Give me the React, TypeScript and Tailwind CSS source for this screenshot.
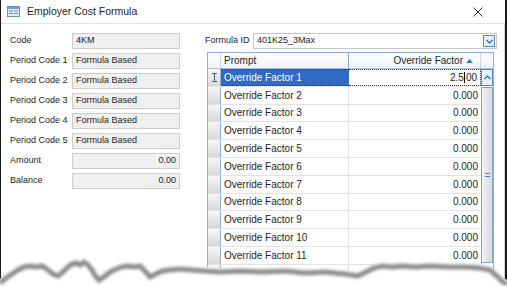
import React from 'react'

const fields = [
  { label: 'Code', value: '4KM', right: false },
  { label: 'Period Code 1', value: 'Formula Based', right: false },
  { label: 'Period Code 2', value: 'Formula Based', right: false },
  { label: 'Period Code 3', value: 'Formula Based', right: false },
  { label: 'Period Code 4', value: 'Formula Based', right: false },
  { label: 'Period Code 5', value: 'Formula Based', right: false },
  { label: 'Amount', value: '0.00', right: true },
  { label: 'Balance', value: '0.00', right: true },
]

const rows = Array.from({ length: 12 }, (_, i) => `Override Factor ${i + 1}`)

function WindowIcon() {
  return (
    <svg width="13" height="11" viewBox="0 0 13 11" className="shrink-0">
      <rect x="0.5" y="0.5" width="12" height="10" fill="#dfe8f4" stroke="#6f8fb8" />
      <rect x="1" y="1" width="11" height="2" fill="#7d9cc6" />
      <rect x="2" y="4.5" width="4" height="1" fill="#6f8fb8" />
      <rect x="7" y="4.5" width="4" height="1" fill="#6f8fb8" />
      <rect x="2" y="7" width="4" height="1" fill="#6f8fb8" />
      <rect x="7" y="7" width="4" height="1" fill="#6f8fb8" />
    </svg>
  )
}

function TornEdge() {
  const edge =
    'M0,279 L6,274 L12,270 L18,266 L24,263 L30,262 L36,263 L42,262 L48,266 L53,270 L58,272 L63,268 L68,263 L72,260 L76,259 L80,261 L84,258 L88,261 L92,266 L96,273 L99,276 L104,273 L110,268 L116,265 L122,263 L128,262 L134,263 L140,262 L145,267 L150,273 L156,270 L162,267 L170,266 L180,265 L192,266 L205,267 L220,268 L240,267 L262,268 L285,267 L305,269 L325,268 L345,270 L358,272 L366,268 L374,264 L382,262 L392,263 L402,262 L415,263 L430,262 L448,263 L465,263 L480,264 L490,266 L497,272 L503,278 L507,280'
  return (
    <svg width="507" height="286" viewBox="0 0 507 286" className="pointer-events-none absolute left-0 top-0">
      <defs>
        <filter id="blur" x="-10%" y="-50%" width="120%" height="200%">
          <feGaussianBlur stdDeviation="1.8" />
        </filter>
      </defs>
      <path d={`${edge} L507,286 L0,286 Z`} fill="#ffffff" />
      <path d={edge} transform="translate(0,4)" fill="none" stroke="#8c8c8c" strokeWidth="5" filter="url(#blur)" />
    </svg>
  )
}

export default function App() {
  return (
    <div className="relative h-[286px] w-[507px] overflow-hidden bg-white font-['Liberation_Sans',Arial,sans-serif] text-[9px] text-[#1e1e1e]">
      <div className="flex h-[286px] flex-col border-l border-r-2 border-l-[#1a1a1a] border-r-[#1a1a1a]">
        <div className="flex h-[24px] items-center gap-[7px] border-b border-[#e3e3e3] pl-[6px] pr-[22px]">
          <WindowIcon />
          <span className="text-[10.5px] leading-none">Employer Cost Formula</span>
          <svg width="10" height="10" viewBox="0 0 10 10" className="ml-auto">
            <path d="M0.5,0.5 L9.5,9.5 M9.5,0.5 L0.5,9.5" stroke="#333" strokeWidth="1" />
          </svg>
        </div>

        <div className="flex flex-1 border-r border-[#d6d6d6] pt-[7px]">
          <div className="flex w-[204px] flex-col pl-[9px]">
            {fields.map((f) => (
              <div key={f.label} className="flex h-[20px] items-center">
                <span className="w-[62px] whitespace-nowrap">{f.label}</span>
                <div
                  className={`flex h-[16px] w-[108px] items-center border border-[#cdcdcd] bg-[#f0f0f0] px-[3px] ${
                    f.right ? 'justify-end' : ''
                  }`}
                >
                  {f.value}
                </div>
              </div>
            ))}
          </div>

          <div className="flex flex-1 flex-col">
            <div className="flex h-[20px] items-center">
              <span className="w-[48px] whitespace-nowrap">Formula ID</span>
              <div className="flex h-[16px] w-[244px] items-center border border-[#c6c6c6] bg-white pl-[3px] pr-[1px]">
                <span>401K25_3Max</span>
                <div className="ml-auto flex h-[12px] w-[12px] items-center justify-center border border-[#4f8bd6] bg-[#e5f1fb]">
                  <svg width="7" height="5" viewBox="0 0 7 5">
                    <path d="M0.5,1 L3.5,4 L6.5,1" fill="none" stroke="#2c5fa8" strokeWidth="1.2" />
                  </svg>
                </div>
              </div>
            </div>

            <div className="ml-[2px] mt-[1px] flex w-[287px] flex-col border border-[#8fb0dc] text-[10px]">
              <div className="flex h-[16px] border-b border-[#a9c1e0] bg-gradient-to-b from-white to-[#f1f4f8]">
                <div className="w-[13px] border-r border-[#c9d7ea]" />
                <div className="flex w-[128px] items-center border-r border-[#86aad8] pl-[3px]">Prompt</div>
                <div className="flex w-[132px] items-center justify-end gap-[3px] border-r border-[#c9d7ea] pr-[7px]">
                  Override Factor
                  <svg width="7" height="4" viewBox="0 0 7 4">
                    <path d="M0,4 L3.5,0 L7,4 Z" fill="#3a76c4" />
                  </svg>
                </div>
                <div className="flex-1" />
              </div>

              <div className="flex">
                <div className="flex w-[273px] flex-col">
                  {rows.map((r, i) => (
                    <div key={r} className="flex h-[17.8px] border-b border-[#e3e3e3]">
                      <div className="flex w-[13px] items-center justify-center border-r border-[#8fb0dc] bg-gradient-to-b from-[#f7f7f7] to-[#d8d8d8]">
                        {i === 0 && (
                          <svg width="5" height="9" viewBox="0 0 5 9">
                            <path d="M0,0.5 H5 M2.5,0.5 V8.5 M0,8.5 H5" stroke="#3f5f95" strokeWidth="1" />
                          </svg>
                        )}
                      </div>
                      {i === 0 ? (
                        <>
                          <div className="flex w-[128px] items-center border-y border-dotted border-[#1f3f7a] bg-[#316ac5] pl-[3px] text-white">
                            {r}
                          </div>
                          <div className="flex w-[132px] items-center justify-end border-y border-r border-dotted border-[#1f3f7a] bg-white pr-[3px]">
                            2.5<span className="mx-[0.5px] h-[11px] w-px bg-black" />00
                          </div>
                        </>
                      ) : (
                        <>
                          <div className="flex w-[128px] items-center border-r border-[#e3e3e3] pl-[3px]">{r}</div>
                          <div className="flex w-[132px] items-center justify-end pr-[3px]">0.000</div>
                        </>
                      )}
                    </div>
                  ))}
                </div>

                <div className="flex w-[13px] flex-col">
                  <div className="flex h-[17px] items-center justify-center border border-[#4f8bd6] bg-[#e5f1fb]">
                    <svg width="7" height="5" viewBox="0 0 7 5">
                      <path d="M0.5,4 L3.5,1 L6.5,4" fill="none" stroke="#2c5fa8" strokeWidth="1.2" />
                    </svg>
                  </div>
                  <div className="mt-px flex h-[176px] items-center justify-center border border-[#7aa4d8] bg-gradient-to-r from-[#f4f4f4] to-[#d9d9d9]">
                    <svg width="5" height="4" viewBox="0 0 5 4">
                      <path d="M0,0.5 H5 M0,3.5 H5" stroke="#4f7fc0" strokeWidth="1" />
                    </svg>
                  </div>
                </div>
              </div>
            </div>
          </div>
        </div>
      </div>
      <TornEdge />
    </div>
  )
}
